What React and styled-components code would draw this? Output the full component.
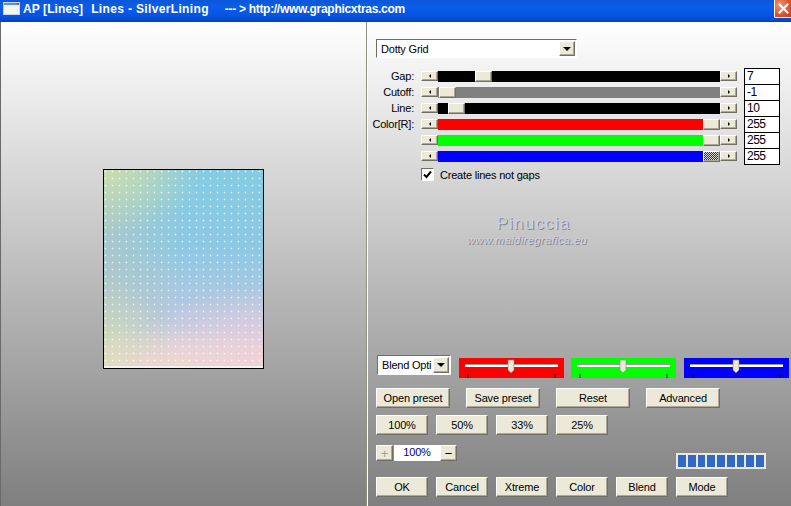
import React from 'react';
import styled, { createGlobalStyle } from 'styled-components';

const GlobalStyle = createGlobalStyle`
  html, body {
    margin: 0;
    padding: 0;
    overflow: hidden;
    background: #808080;
  }
  * { box-sizing: border-box; }
`;

const Window = styled.div`
  width: 791px;
  height: 506px;
  display: flex;
  flex-direction: column;
  overflow: hidden;
  font-family: "Liberation Sans", Arial, sans-serif;
  font-size: 11px;
  letter-spacing: -0.2px;
  color: #000;
`;

const TitleBar = styled.div`
  height: 22px;
  flex: none;
  display: flex;
  align-items: flex-start;
  padding-left: 3px;
  background: linear-gradient(180deg, #0a57d8 0%, #0a5eea 30%, #0553e0 75%, #0343b8 100%);
  color: #fff;
`;

const TitlePart = styled.span`
  margin-left: ${p => p.$left}px;
  font-size: 12px;
  font-weight: bold;
  line-height: 19px;
  white-space: pre;
  letter-spacing: ${p => p.$spacing}px;
`;

const CloseButton = styled.div`
  margin-left: auto;
  width: 17px;
  height: 18px;
  display: flex;
  align-items: center;
  justify-content: center;
  background: radial-gradient(circle at 30% 30%, #f0977a, #e0532a 60%, #c83c14);
  border-left: 1px solid #fff;
  border-bottom: 1px solid #fff;
  border-bottom-left-radius: 2px;
`;

const Body = styled.div`
  flex: 1;
  display: flex;
  min-height: 0;
`;

const LeftPanel = styled.div`
  width: 367px;
  flex: none;
  display: flex;
  align-items: center;
  justify-content: center;
  padding-top: 10px;
  border-left: 1px solid #6a6a6a;
  border-right: 1px solid #8f8f88;
  background: linear-gradient(180deg, #fff 0%, #7f7f7f 100%);
`;

const Preview = styled.div`
  width: 161px;
  height: 200px;
  border: 1px solid #000;
  box-shadow: inset 0 -2px 0 #f4f0ee;
  background-color: #a6cfe0;
  background-image:
    radial-gradient(circle at 1.5px 1.5px, rgba(255, 255, 255, 0.8) 0.7px, transparent 1.1px),
    radial-gradient(ellipse 75% 22% at 45% 100%, #f0d8d0 0%, rgba(240, 216, 208, 0) 100%),
    radial-gradient(ellipse 45% 45% at 0% 100%, #d8e0b8 0%, rgba(216, 224, 184, 0) 100%),
    radial-gradient(ellipse 85% 42% at 100% 100%, #f2cfdc 0%, rgba(242, 207, 220, 0) 100%),
    radial-gradient(ellipse 62% 32% at 0% 0%, #c9deb0 0%, rgba(201, 222, 176, 0) 100%),
    linear-gradient(90deg, rgba(180, 200, 195, 0.75) 0%, rgba(180, 200, 195, 0) 50%),
    linear-gradient(180deg, #84cce2 0%, #8ec8e4 40%, #b4c8e0 70%, #d4cfe0 100%);
  background-size: 7px 7px, auto, auto, auto, auto, auto, auto;
`;

const RightPanel = styled.div`
  flex: 1;
  display: flex;
  flex-direction: column;
  padding: 17px 0 0 8px;
  border-left: 1px solid #fff;
  background: linear-gradient(180deg, #fff 0%, #7f7f7f 100%);
`;

const Bevel = styled.div`
  background: #ece9d8;
  border: 1px solid;
  border-color: #fff #716f64 #716f64 #fff;
  box-shadow: inset -1px -1px 0 #aca899;
`;

const DropDown = styled.div`
  width: ${p => p.$width}px;
  height: ${p => p.$height}px;
  margin-left: ${p => p.$left || 0}px;
  flex: none;
  display: flex;
  align-items: center;
  justify-content: space-between;
  background: #fff;
  border: 1px solid;
  border-color: #716f64 #fff #fff #716f64;
  padding: 1px;
  span { padding-left: 3px; white-space: nowrap; }
`;

const DropArrow = styled(Bevel)`
  width: 16px;
  height: 100%;
  flex: none;
  display: flex;
  align-items: center;
  justify-content: center;
`;

const DownGlyph = styled.i`
  display: block;
  border-left: 4px solid transparent;
  border-right: 4px solid transparent;
  border-top: 4px solid #000;
`;

const SliderRows = styled.div`
  margin-top: 10px;
  display: flex;
  flex-direction: column;
`;

const SliderRow = styled.div`
  height: 16px;
  display: flex;
  align-items: center;
`;

const RowLabel = styled.label`
  width: 38px;
  flex: none;
  margin-right: 7px;
  display: flex;
  justify-content: flex-end;
  line-height: 16px;
  white-space: nowrap;
`;

const ArrowButton = styled(Bevel)`
  width: 17px;
  height: 10px;
  flex: none;
  display: flex;
  align-items: center;
  justify-content: center;
`;

const SideGlyph = styled.i`
  display: block;
  border-top: 2px solid transparent;
  border-bottom: 2px solid transparent;
  ${p => (p.$right ? 'border-left: 2px solid #000;' : 'border-right: 2px solid #000;')}
`;

const Track = styled.div`
  width: 282px;
  height: 11px;
  flex: none;
  display: flex;
  background: ${p => p.$color};
`;

const TrackStart = styled.div`
  width: ${p => p.$width}px;
  flex: none;
`;

const Thumb = styled(Bevel)`
  width: 17px;
  flex: none;
  ${p => p.$dither && `
    background: repeating-conic-gradient(#333 0 25%, #ddd 0 50%) 0 0 / 2px 2px;
  `}
`;

const ValueBox = styled.div`
  width: 36px;
  height: 17px;
  flex: none;
  margin: 0 0 -1px 7px;
  padding-left: 2px;
  background: #fff;
  border: 1px solid #000;
  line-height: 14px;
  font-size: 12px;
  letter-spacing: -0.5px;
`;

const CheckRow = styled.div`
  margin: 4px 0 0 45px;
  height: 13px;
  display: flex;
  align-items: center;
  gap: 6px;
`;

const CheckBox = styled.div`
  width: 13px;
  height: 13px;
  background: #fff;
  border: 1px solid;
  border-color: #716f64 #fff #fff #716f64;
  display: flex;
  align-items: center;
  justify-content: center;
`;

const Watermark = styled.div`
  margin: 34px 0 0 90px;
  width: 122px;
  height: 106px;
  display: flex;
  flex-direction: column;
  align-items: center;
  color: #d0d0dc;
  text-shadow: 1px 1px 0 #85858f;
`;

const MarkName = styled.div`
  margin-left: 13px;
  font-size: 17px;
  line-height: 18px;
  letter-spacing: 1.2px;
`;

const MarkUrl = styled.div`
  font-size: 11px;
  line-height: 14px;
  font-style: italic;
  letter-spacing: 0.45px;
  white-space: nowrap;
`;

const BlendRow = styled.div`
  display: flex;
  align-items: flex-start;
  height: 23px;
  margin-top: 34px;
`;

const ColorBox = styled.div`
  width: 105px;
  height: 20px;
  margin: 3px 0 0 ${p => p.$left}px;
  flex: none;
  background: ${p => p.$color};
  svg { display: block; }
`;

const ButtonRow = styled.div`
  display: flex;
  gap: ${p => p.$gap}px;
  margin-top: ${p => p.$top}px;
`;

const PushButton = styled(Bevel).attrs({ as: 'button' })`
  width: ${p => p.$width}px;
  height: 20px;
  padding: 0;
  font-family: inherit;
  font-size: 11px;
  letter-spacing: -0.15px;
  color: #000;
`;

const ZoomRow = styled.div`
  display: flex;
  align-items: flex-start;
  margin-top: 10px;
  height: 32px;
`;

const ZoomButton = styled(Bevel)`
  width: 17px;
  height: 16px;
  flex: none;
  display: flex;
  align-items: center;
  justify-content: center;
  font-size: 13px;
  line-height: 1;
  color: ${p => (p.$muted ? '#a0a090' : '#000')};
`;

const ZoomValue = styled.div`
  width: 46px;
  height: 16px;
  flex: none;
  background: #fff;
  color: #000080;
  text-align: center;
  line-height: 15px;
`;

const Progress = styled.div`
  margin: 8px 0 0 219px;
  width: 90px;
  height: 16px;
  flex: none;
  display: flex;
  gap: 2px;
  padding: 2px;
  background: #ece9d8;
`;

const ProgressCell = styled.div`
  flex: 1;
  background: #316ac5;
`;

const Gap = styled.div`
  width: ${p => p.$width}px;
  flex: none;
`;

const sliders = [
  { label: 'Gap:', value: '7', color: '#000', thumb: 37 },
  { label: 'Cutoff:', value: '-1', color: '#808080', thumb: 1 },
  { label: 'Line:', value: '10', color: '#000', thumb: 10 },
  { label: 'Color[R]:', value: '255', color: '#f00', thumb: 265 },
  { label: '', value: '255', color: '#0f0', thumb: 265 },
  { label: '', value: '255', color: '#00f', thumb: 265, dither: true },
];

const rows = [
  { left: 8, color: '#f00', thumb: 52 },
  { left: 7, color: '#0f0', thumb: 52 },
  { left: 8, color: '#00f', thumb: 52 },
];

function BlendSlider({ thumb }) {
  return (
    <svg width="105" height="20" viewBox="0 0 105 20">
      <rect x="6" y="6" width="93" height="3" fill="#fff" />
      <rect x="6" y="6" width="93" height="1" fill="#9a9a9a" />
      <path d={`M${thumb - 3} 2h6v10l-3 3l-3-3z`} fill="#ece9d8" stroke="#8a887c" strokeWidth="0.6" />
      <path d="M9 16v4M96 16v4" stroke="#000" strokeWidth="1" />
    </svg>
  );
}

export default function App() {
  return (
    <Window>
      <GlobalStyle />
      <TitleBar>
        <svg width="17" height="14" viewBox="0 0 17 14" style={{ marginTop: 2 }}>
          <rect x="0.5" y="0.5" width="16" height="12" fill="#f4f4f4" stroke="#c8d4e8" />
          <rect x="1" y="1" width="15" height="2" fill="#5f8fd8" />
          <rect x="14" y="1" width="2" height="2" fill="#d84040" />
        </svg>
        <TitlePart $left={3} $spacing={0.1}>AP [Lines]</TitlePart>
        <TitlePart $left={8} $spacing={0.35}>Lines - SilverLining</TitlePart>
        <TitlePart $left={16} $spacing={-0.3}>{'--- > http://www.graphicxtras.com'}</TitlePart>
        <CloseButton>
          <svg width="11" height="11" viewBox="0 0 11 11">
            <path d="M1.5 1.5l8 8M9.5 1.5l-8 8" stroke="#fff" strokeWidth="2" strokeLinecap="square" />
          </svg>
        </CloseButton>
      </TitleBar>
      <Body>
        <LeftPanel>
          <Preview />
        </LeftPanel>
        <RightPanel>
          <DropDown $width={201} $height={19}>
            <span>Dotty Grid</span>
            <DropArrow><DownGlyph /></DropArrow>
          </DropDown>
          <SliderRows>
            {sliders.map((s, i) => (
              <SliderRow key={i}>
                <RowLabel>{s.label}</RowLabel>
                <ArrowButton><SideGlyph /></ArrowButton>
                <Track $color={s.color}>
                  <TrackStart $width={s.thumb} />
                  <Thumb $dither={s.dither} />
                </Track>
                <ArrowButton><SideGlyph $right /></ArrowButton>
                <ValueBox>{s.value}</ValueBox>
              </SliderRow>
            ))}
          </SliderRows>
          <CheckRow>
            <CheckBox>
              <svg width="9" height="9" viewBox="0 0 9 9">
                <path d="M1 4.5l2.5 2.5L8 1.5" fill="none" stroke="#000" strokeWidth="2" />
              </svg>
            </CheckBox>
            <span>Create lines not gaps</span>
          </CheckRow>
          <Watermark>
            <MarkName>Pinuccia</MarkName>
            <MarkUrl>www.maidiregrafica.eu</MarkUrl>
          </Watermark>
          <BlendRow>
            <DropDown $width={74} $height={20} $left={1}>
              <span>Blend Opti</span>
              <DropArrow><DownGlyph /></DropArrow>
            </DropDown>
            {rows.map((r, i) => (
              <ColorBox key={i} $left={r.left} $color={r.color}>
                <BlendSlider thumb={r.thumb} />
              </ColorBox>
            ))}
          </BlendRow>
          <ButtonRow $gap={16} $top={10}>
            <PushButton $width={74}>Open preset</PushButton>
            <PushButton $width={74}>Save preset</PushButton>
            <PushButton $width={74}>Reset</PushButton>
            <PushButton $width={74}>Advanced</PushButton>
          </ButtonRow>
          <ButtonRow $gap={8} $top={7}>
            <PushButton $width={52}>100%</PushButton>
            <PushButton $width={52}>50%</PushButton>
            <PushButton $width={52}>33%</PushButton>
            <PushButton $width={52}>25%</PushButton>
          </ButtonRow>
          <ZoomRow>
            <ZoomButton $muted>+</ZoomButton>
            <Gap $width={1} />
            <ZoomValue>100%</ZoomValue>
            <ZoomButton>−</ZoomButton>
            <Progress>
              {Array.from({ length: 9 }, (_, i) => <ProgressCell key={i} />)}
            </Progress>
          </ZoomRow>
          <ButtonRow $gap={8} $top={0}>
            <PushButton $width={52}>OK</PushButton>
            <PushButton $width={52}>Cancel</PushButton>
            <PushButton $width={52}>Xtreme</PushButton>
            <PushButton $width={52}>Color</PushButton>
            <PushButton $width={52}>Blend</PushButton>
            <PushButton $width={52}>Mode</PushButton>
          </ButtonRow>
        </RightPanel>
      </Body>
    </Window>
  );
}
